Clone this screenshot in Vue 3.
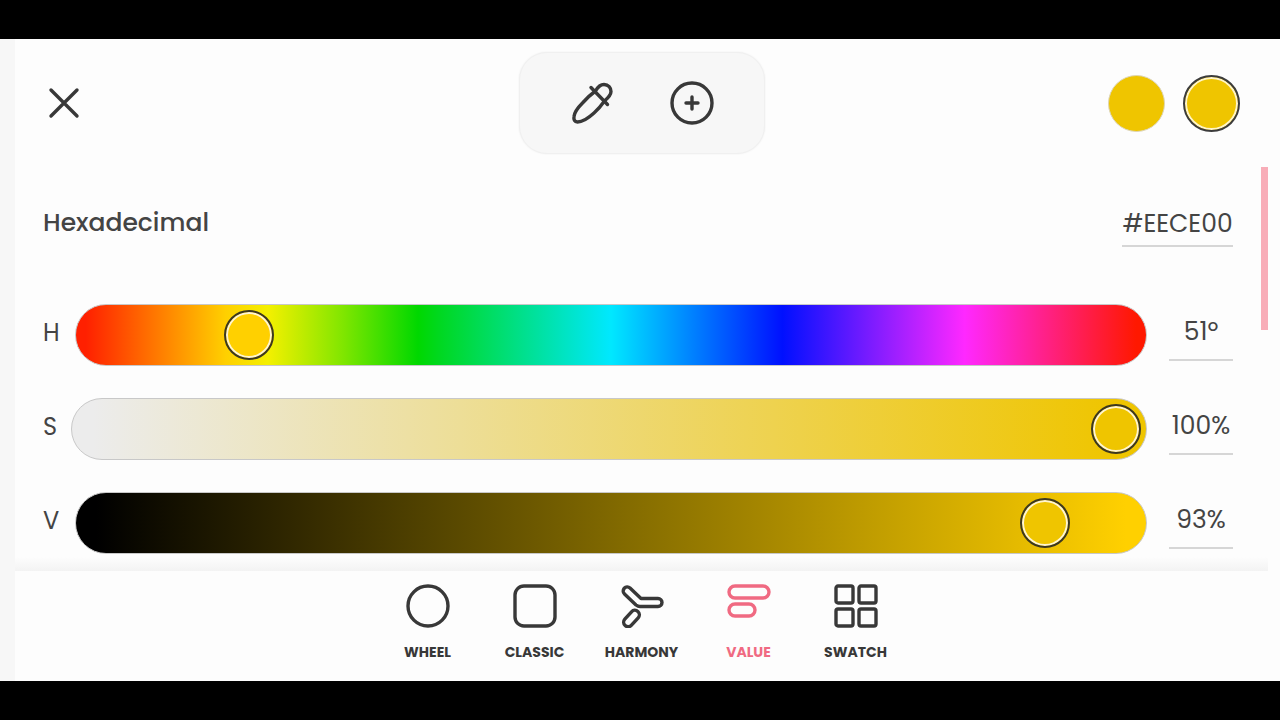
<script setup>
import { ref, reactive } from 'vue'

const hex = ref('#EECE00')
const channels = reactive([
  { key: 'h', label: 'H', name: 'Hue', max: 360, value: 51, unit: 'º' },
  { key: 's', label: 'S', name: 'Saturation', max: 100, value: 100, unit: '%' },
  { key: 'v', label: 'V', name: 'Value', max: 100, value: 93, unit: '%' },
])
const active = ref('value')

function setValue(channel, text) {
  const n = parseInt(text, 10)
  if (!Number.isNaN(n)) channel.value = Math.min(channel.max, Math.max(0, n))
}
</script>

<template>
  <div class="screen">
    <main class="app">
      <header class="header">
        <button class="plain close" type="button" aria-label="Close">
          <svg width="40" height="40" viewBox="0 0 40 40"><path d="M8 7 34 33M34 7 8 33" /></svg>
        </button>
        <div class="toolbar">
          <button class="plain" type="button" aria-label="Eyedropper">
            <svg width="44" height="44" viewBox="0 0 44 44">
              <path d="M25.500 10 C28 5.500 31 3.500 34 3.500 C38.500 3.500 41 7 41 10.500 C41 14 38 17 34.500 20 C31 25 28 28.500 24 32 C18 37.500 12 41 7.500 41 C4.500 41 3.500 38.500 4 35.500 C4.500 31 8 26.500 12.500 22 C17 17 22 12.500 25.500 10 Z" />
              <path d="M21 6.500 37.500 23.500" />
            </svg>
          </button>
          <button class="plain" type="button" aria-label="Add color">
            <svg width="44" height="44" viewBox="0 0 44 44">
              <circle cx="22" cy="22" r="20" />
              <path d="M22 16V28M16 22H28" />
            </svg>
          </button>
        </div>
        <div class="swatches">
          <button class="swatch" type="button" aria-label="Previous color"></button>
          <button class="swatch current" type="button" aria-label="Current color"></button>
        </div>
      </header>

      <div class="body">
        <section class="panel">
          <div class="hex-row">
            <label for="hex">Hexadecimal</label>
            <input id="hex" v-model="hex" class="field hex" type="text" />
          </div>
          <div class="sliders">
            <div v-for="c in channels" :key="c.key" class="row" :class="c.key">
              <label class="channel" :for="c.key">{{ c.label }}</label>
              <input :id="c.key" v-model.number="c.value" class="slider" type="range" min="0" :max="c.max" />
              <input
                class="field"
                type="text"
                :aria-label="c.name"
                :value="c.value + c.unit"
                @change="setValue(c, $event.target.value)"
              />
            </div>
          </div>
        </section>
        <div class="scroll"><div class="bar"></div></div>
      </div>

      <nav class="tabs">
        <button class="tab" :class="{ active: active === 'wheel' }" type="button" @click="active = 'wheel'">
          <svg width="44" height="44" viewBox="0 0 44 44"><circle cx="22" cy="22" r="20" /></svg>
          <span>WHEEL</span>
        </button>
        <button class="tab" :class="{ active: active === 'classic' }" type="button" @click="active = 'classic'">
          <svg width="44" height="44" viewBox="0 0 44 44"><rect x="2" y="2" width="40" height="40" rx="9" /></svg>
          <span>CLASSIC</span>
        </button>
        <button class="tab" :class="{ active: active === 'harmony' }" type="button" @click="active = 'harmony'">
          <svg width="44" height="44" viewBox="0 0 44 44">
            <path d="M10 4 L21 14.500 H38 A4 4 0 0 1 38 22.500 H20 Q18 22.500 16 21 L4.500 10 A4 4 0 0 1 10 4 Z" />
            <rect x="2" y="30" width="19" height="9" rx="4.500" transform="rotate(-48 11.500 34.500)" />
          </svg>
          <span>HARMONY</span>
        </button>
        <button class="tab" :class="{ active: active === 'value' }" type="button" @click="active = 'value'">
          <svg width="44" height="44" viewBox="0 0 44 44">
            <rect x="2" y="2" width="40" height="12" rx="6" />
            <rect x="2" y="20" width="26" height="12" rx="6" />
          </svg>
          <span>VALUE</span>
        </button>
        <button class="tab" :class="{ active: active === 'swatch' }" type="button" @click="active = 'swatch'">
          <svg width="44" height="44" viewBox="0 0 44 44">
            <rect x="2" y="2" width="17" height="17" rx="2" />
            <rect x="25" y="2" width="17" height="17" rx="2" />
            <rect x="2" y="25" width="17" height="17" rx="2" />
            <rect x="25" y="25" width="17" height="17" rx="2" />
          </svg>
          <span>SWATCH</span>
        </button>
      </nav>
    </main>
  </div>
</template>

<style>
body {
  background: #000;
}
</style>

<style scoped>
.screen {
  display: flex;
  min-height: 100vh;
  box-sizing: border-box;
  padding: 39px 0;
  background: #000;
  color: #444;
  font-family: Poppins, Inter, "Open Sans", sans-serif;
}
.app {
  flex: 1;
  display: flex;
  flex-direction: column;
  padding-right: 12px;
  border-left: 15px solid #f7f7f7;
  background: #fdfdfd;
}
svg {
  display: block;
  fill: none;
  stroke: currentColor;
  stroke-width: 3.4;
  stroke-linecap: round;
  stroke-linejoin: round;
}
button,
input {
  margin: 0;
  font: inherit;
  color: inherit;
}
.plain {
  padding: 0;
  border: 0;
  background: none;
  color: #383838;
}
.header {
  display: grid;
  grid-template-columns: 1fr auto 1fr;
  align-items: center;
  padding: 13px 28px;
}
.close {
  justify-self: start;
}
.toolbar {
  display: flex;
  gap: 56px;
  padding: 28px 50px;
  border: 1px solid #f0f0f0;
  border-radius: 28px;
  background: #f7f7f7;
  box-shadow: 0 0 2px #eee;
}
.swatches {
  justify-self: end;
  display: flex;
  gap: 18px;
}
.swatch {
  box-sizing: border-box;
  width: 57px;
  height: 57px;
  padding: 0;
  border: 1px solid #ddd5b5;
  border-radius: 50%;
  background: #efc500;
}
.swatch.current {
  border: 2px solid #3c3c3c;
  box-shadow: inset 0 0 0 2px #fff5c8;
}
.body {
  flex: 1;
  display: flex;
  background: linear-gradient(#fdfdfd, #f3f3f3) bottom / 100% 14px no-repeat;
}
.panel {
  flex: 1;
  min-width: 0;
  padding: 36px 28px 16px;
}
.scroll {
  width: 7px;
}
.bar {
  height: 163px;
  background: #f8adb8;
}
.hex-row {
  display: flex;
  justify-content: space-between;
  margin-bottom: 57px;
  font-size: 25px;
  font-weight: 500;
  line-height: 40px;
}
.field {
  box-sizing: border-box;
  width: 64px;
  height: 57px;
  padding: 0;
  border: 0;
  border-bottom: 2px solid #d6d6d6;
  border-radius: 0;
  background: none;
  font-size: 25px;
  font-weight: 400;
  text-align: center;
}
.field.hex {
  width: 111px;
  height: 44px;
}
.sliders {
  display: grid;
  gap: 32px;
}
.row {
  display: flex;
  align-items: flex-start;
}
.channel {
  width: 32px;
  font-size: 24px;
  line-height: 58px;
}
.s .channel {
  width: 28px;
}
.slider {
  flex: 1;
  min-width: 0;
  box-sizing: border-box;
  height: 62px;
  margin-right: 22px;
  padding: 0 5px;
  border: 1px solid #c8c8c8;
  border-radius: 31px;
  appearance: none;
  background-origin: border-box;
}
.h .slider {
  background-image: linear-gradient(90deg, #ff2000 1%, #ff8c00 9%, #ffcf00 14%, #f4f000 18%, #80e600 25%, #00d800 32%, #00d820 34%, #00e8ff 50%, #0010ff 66%, #ff28ff 83%, #ff1800 99%);
}
.s .slider {
  background-image: linear-gradient(90deg, #ececec 2%, #efc500 97%);
}
.v .slider {
  background-image: linear-gradient(90deg, #000 2%, #ffd000 98%);
}
.slider::-webkit-slider-thumb {
  appearance: none;
  box-sizing: border-box;
  width: 50px;
  height: 50px;
  border: 2px solid #3c3820;
  border-radius: 50%;
  background: #efc500;
  box-shadow: inset 0 0 0 2px #fff5d0;
}
.h .slider::-webkit-slider-thumb {
  background: #ffd000;
}
.tabs {
  display: flex;
  justify-content: center;
  height: 110px;
}
.tab {
  display: flex;
  flex-direction: column;
  align-items: center;
  gap: 14px;
  width: 107px;
  padding: 13px 0 0;
  border: 0;
  background: none;
  color: #383838;
  font-size: 14px;
  font-weight: 700;
  line-height: 20px;
}
.tab.active {
  color: #f06a82;
}
</style>
